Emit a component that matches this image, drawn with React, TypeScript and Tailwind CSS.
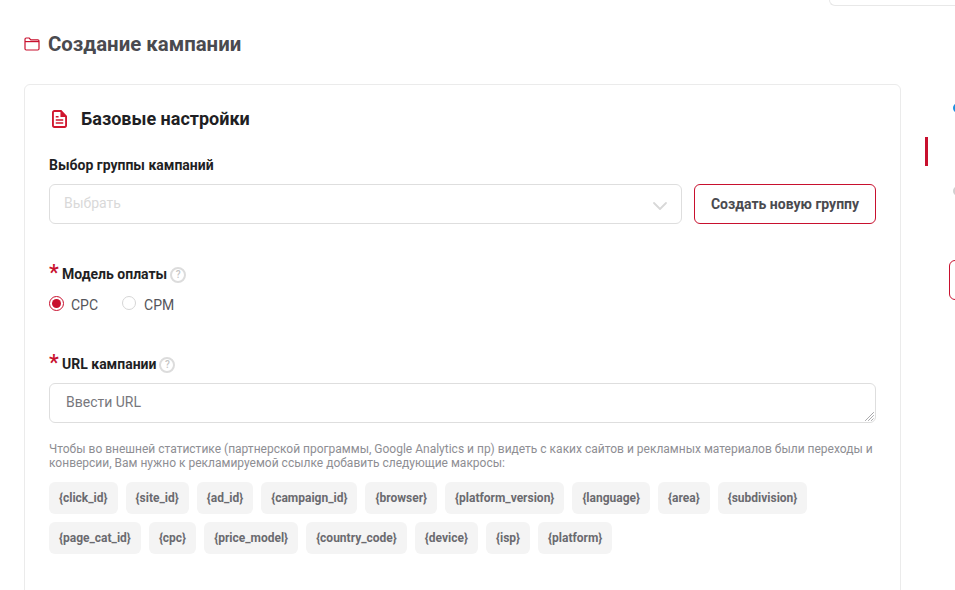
import React from 'react';
import { ChevronDown } from 'lucide-react';

const macros = [
    ['{click_id}', '{site_id}', '{ad_id}', '{campaign_id}', '{browser}', '{platform_version}', '{language}', '{area}', '{subdivision}'],
    ['{page_cat_id}', '{cpc}', '{price_model}', '{country_code}', '{device}', '{isp}', '{platform}'],
];

const FolderIcon = () => (
    <svg width="16" height="14" viewBox="0 0 16 14" fill="none" stroke="#c8102e" strokeWidth="1.2" className="shrink-0">
        <path d="M1 3V2.2C1 1.5 1.5 1 2.2 1H5.2L6.8 2.8H13.8C14.5 2.8 15 3.3 15 4V11.8C15 12.5 14.5 13 13.8 13H2.2C1.5 13 1 12.5 1 11.8V3Z" />
        <path d="M1 4.6H15" />
    </svg>
);

const FileIcon = () => (
    <svg width="15" height="18" viewBox="0 0 16 18" preserveAspectRatio="none" className="shrink-0">
        <path
            fillRule="evenodd"
            fill="#d0172f"
            d="M2.5 0H10L16 6V15.5C16 16.9 14.9 18 13.5 18H2.5C1.1 18 0 16.9 0 15.5V2.5C0 1.1 1.1 0 2.5 0ZM2 2.5V15.5C2 15.8 2.2 16 2.5 16H13.5C13.8 16 14 15.8 14 15.5V7H9V2H2.5C2.2 2 2 2.2 2 2.5ZM4 6V7.5H7V6ZM4 9.2V10.7H12V9.2ZM4 12.2V13.7H12V12.2Z"
        />
    </svg>
);

const Hint = () => (
    <span className="ml-[3px] mt-[1px] flex h-4 w-4 items-center justify-center rounded-full border-2 border-[#dcdcdc] text-[10px] font-medium leading-none text-[#c4c4c4]">
        ?
    </span>
);

const Label = ({ text }: { text: string }) => (
    <div className="flex h-5 items-center">
        <span className="-mt-[4px] h-5 w-[13px] text-[22px] font-medium leading-[22px] text-[#c8102e]">*</span>
        <span className="text-sm font-bold text-[#1f1f24]">{text}</span>
        <Hint />
    </div>
);

export default function App() {
    return (
        <div className="flex h-[590px] w-[955px] flex-col overflow-hidden bg-white font-['Roboto',sans-serif]">
            <div className="ml-[829px] h-[6px] w-[140px] shrink-0 rounded-bl-md border-b border-l border-[#e8e8e8]" />

            <div className="mt-[26px] flex h-6 shrink-0 items-center pl-6">
                <FolderIcon />
                <h1 className="ml-2 text-[20.4px] font-bold text-[#4a4a4f]">Создание кампании</h1>
            </div>

            <div className="mt-[28px] flex min-h-0 flex-1">
                <div className="ml-6 h-[600px] w-[877px] shrink-0 rounded-t-md border border-[#ebebeb] px-6 pt-5">
                    <div className="flex h-7 items-center pl-[3px]">
                        <FileIcon />
                        <h2 className="ml-[14px] text-lg font-bold text-[#1f1f24]">Базовые настройки</h2>
                    </div>

                    <div className="mt-[24px] text-sm font-bold leading-4 text-[#1f1f24]">Выбор группы кампаний</div>

                    <div className="mt-[11px] flex gap-3">
                        <div className="flex h-10 flex-1 items-center justify-between rounded-md border border-[#dedede] pl-[14px] pr-[9px]">
                            <span className="mb-[2px] text-sm text-[#d9d9d9]">Выбрать</span>
                            <ChevronDown className="mt-[3px] h-6 w-6 text-[#d8d8d8]" strokeWidth={1.8} />
                        </div>
                        <button className="h-10 w-[182px] rounded-md border border-[#c8102e] text-sm font-bold text-[#4a4a4f]">
                            Создать новую группу
                        </button>
                    </div>

                    <div className="mt-[40px]">
                        <Label text="Модель оплаты" />
                    </div>

                    <div className="mt-[11px] flex h-5 items-center text-sm text-[#55555a]">
                        <span className="mb-[4px] flex h-[15px] w-[15px] items-center justify-center rounded-full border border-[#c8102e]">
                            <span className="h-[9px] w-[9px] rounded-full bg-[#c8102e]" />
                        </span>
                        <span className="ml-[7px]">CPC</span>
                        <span className="mb-[4px] ml-[24px] h-[14px] w-[14px] rounded-full border border-[#d6d6d6]" />
                        <span className="ml-2">CPM</span>
                    </div>

                    <div className="mt-[39px]">
                        <Label text="URL кампании" />
                    </div>

                    <div className="relative mt-[9px] flex h-10 items-center rounded-md border border-[#dedede] pl-4">
                        <span className="mb-[2px] text-sm text-[#77777c]">Ввести URL</span>
                        <svg width="9" height="9" viewBox="0 0 9 9" fill="none" stroke="#66666b" strokeWidth="1" strokeDasharray="1 0.5" className="absolute bottom-[1px] right-[1px]">
                            <path d="M0.5 8.5L8.5 0.5M3.5 8.5L8.5 3.5M6.5 8.5L8.5 6.5" />
                        </svg>
                    </div>

                    <p className="mt-[19px] text-xs leading-[14px] text-[#8e8e93]">
                        Чтобы во внешней статистике (партнерской программы, Google Analytics и пр) видеть с каких сайтов и рекламных материалов были переходы и конверсии, Вам нужно к рекламируемой ссылке добавить следующие макросы:
                    </p>

                    <div className="mt-[12px] flex flex-col gap-2">
                        {macros.map((row, i) => (
                            <div key={i} className="flex gap-2">
                                {row.map(item => (
                                    <span key={item} className="flex h-8 items-center rounded-md bg-[#f4f4f4] px-[10.05px] text-xs font-bold text-[#6a6a6f]">
                                        {item}
                                    </span>
                                ))}
                            </div>
                        ))}
                    </div>
                </div>

                <div className="ml-6 flex w-[30px] shrink-0 flex-col overflow-hidden">
                    <span className="ml-[28px] mt-[19px] h-[10px] w-[10px] shrink-0 rounded-full bg-[#1c8fe0]" />
                    <span className="mt-[24px] h-[29px] w-[3px] shrink-0 bg-[#c8102e]" />
                    <span className="ml-[28px] mt-[20px] h-[10px] w-[10px] shrink-0 rounded-full border-2 border-[#d0d0d0]" />
                    <span className="ml-[24px] mt-[64px] h-10 w-[40px] shrink-0 rounded-md border border-[#c8102e]" />
                </div>
            </div>
        </div>
    );
}
